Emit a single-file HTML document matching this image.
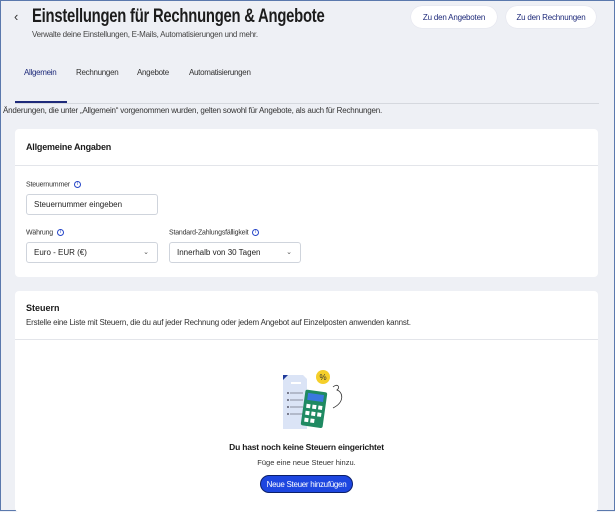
<!DOCTYPE html>
<html><head><meta charset="utf-8"><style>
*{box-sizing:border-box;margin:0;padding:0}
body{width:615px;height:511px;background:#eef0f5;font-family:"Liberation Sans",sans-serif;color:#1c1c1c;position:relative;overflow:hidden;border:1px solid #5b79ad}
.a{position:absolute;white-space:nowrap}
.btn{position:absolute;top:5px;height:22px;background:#fff;border-radius:11px;font-size:8px;letter-spacing:-0.2px;color:#1e2a7a;display:flex;align-items:center;justify-content:center;box-shadow:0 0 1px #ccd}
.card{position:absolute;left:14px;width:583px;background:#fff;border-radius:4px}
.inp{position:absolute;height:21px;border:1px solid #cfd4dc;border-radius:3px;background:#fff;font-size:8px;padding-left:7px;display:flex;align-items:center;color:#222}
.lbl{font-size:7px;color:#333;letter-spacing:-0.2px}
.i{display:inline-block;width:7px;height:7px;border:1px solid #2747c8;border-radius:50%;font-size:5px;line-height:5px;text-align:center;color:#2747c8;vertical-align:middle;margin-left:2px}
.chev{position:absolute;right:8px;top:5px;font-size:7px;color:#555}
.tab{font-size:8px;letter-spacing:-0.3px;top:67px}
</style></head><body>
<div class="a" style="left:13px;top:8px;font-size:13px;color:#333">‹</div>
<div class="a" style="left:31px;top:5px;font-size:19px;font-weight:bold;letter-spacing:-0.3px;transform:scaleX(0.78);transform-origin:left">Einstellungen für Rechnungen &amp; Angebote</div>
<div class="a" style="left:31px;top:29px;font-size:8px;color:#444;letter-spacing:-0.25px">Verwalte deine Einstellungen, E-Mails, Automatisierungen und mehr.</div>
<div class="btn" style="left:410px;width:86px">Zu den Angeboten</div>
<div class="btn" style="left:505px;width:90px">Zu den Rechnungen</div>
<div class="a tab" style="left:23px;color:#1e2a7a">Allgemein</div>
<div class="a tab" style="left:75px;color:#333">Rechnungen</div>
<div class="a tab" style="left:136px;color:#333">Angebote</div>
<div class="a tab" style="left:188px;color:#333">Automatisierungen</div>
<div class="a" style="left:14px;top:102px;width:584px;height:1px;background:#d5d8de"></div>
<div class="a" style="left:14px;top:100px;width:52px;height:2px;background:#1e2a7a"></div>
<div class="a" style="left:2px;top:105px;font-size:8px;color:#333;letter-spacing:-0.2px">Änderungen, die unter „Allgemein“ vorgenommen wurden, gelten sowohl für Angebote, als auch für Rechnungen.</div>
<div class="card" style="top:128px;height:148px">
<div class="a" style="left:11px;top:13px;font-size:9px;font-weight:bold;letter-spacing:-0.2px">Allgemeine Angaben</div>
<div class="a" style="left:0;top:36px;width:583px;height:1px;background:#e3e5ea"></div>
<div class="a lbl" style="left:11px;top:52px">Steuernummer <span class="i">i</span></div>
<div class="inp" style="left:11px;top:65px;width:132px">Steuernummer eingeben</div>
<div class="a lbl" style="left:11px;top:100px">Währung <span class="i">i</span></div>
<div class="a lbl" style="left:154px;top:100px">Standard-Zahlungsfälligkeit <span class="i">i</span></div>
<div class="inp" style="left:11px;top:113px;width:132px">Euro - EUR (€)<span class="chev">⌄</span></div>
<div class="inp" style="left:154px;top:113px;width:132px">Innerhalb von 30 Tagen<span class="chev">⌄</span></div>
</div>
<div class="card" style="top:290px;height:221px">
<div class="a" style="left:11px;top:12px;font-size:9px;font-weight:bold">Steuern</div>
<div class="a" style="left:11px;top:27px;font-size:8px;color:#333;letter-spacing:-0.2px">Erstelle eine Liste mit Steuern, die du auf jeder Rechnung oder jedem Angebot auf Einzelposten anwenden kannst.</div>
<div class="a" style="left:0;top:48px;width:583px;height:1px;background:#e3e5ea"></div>
<svg class="a" style="left:262px;top:78px" width="70" height="64" viewBox="0 0 70 64">
<path d="M6 6 L26 6 L30 10 L30 60 L6 60 Z" fill="#dbe4f6"/>
<path d="M6 6 L11 6 L6 11Z" fill="#1f3a9a"/>
<rect x="14" y="13" width="10" height="2" fill="#fff"/>
<g fill="#334"><circle cx="11" cy="24" r=".9"/><circle cx="11" cy="31" r=".9"/><circle cx="11" cy="38" r=".9"/><circle cx="11" cy="45" r=".9"/></g>
<g stroke="#556" stroke-width=".6"><line x1="13" y1="24" x2="26" y2="24"/><line x1="13" y1="31" x2="26" y2="31"/><line x1="13" y1="38" x2="26" y2="38"/><line x1="13" y1="45" x2="26" y2="45"/></g>
<g transform="rotate(8 38 40)"><rect x="26" y="22" width="22" height="36" rx="2" fill="#1f8a62"/>
<rect x="29" y="25" width="16" height="7" fill="#3a78e0"/>
<g fill="#fff"><rect x="29" y="36" width="4" height="4"/><rect x="35" y="36" width="4" height="4"/><rect x="41" y="36" width="4" height="4"/><rect x="29" y="43" width="4" height="4"/><rect x="35" y="43" width="4" height="4"/><rect x="41" y="43" width="4" height="4"/><rect x="29" y="50" width="4" height="4"/><rect x="35" y="50" width="4" height="4"/></g></g>
<circle cx="46" cy="8" r="7" fill="#f5cf2a"/><text x="46" y="11" font-size="8" text-anchor="middle" fill="#333" font-family="Liberation Sans">%</text>
<path d="M56 18 c4 -4 8 0 4 3 c6 2 8 12 -4 18" fill="none" stroke="#333" stroke-width=".8"/>
</svg>
<div class="a" style="left:0;width:583px;text-align:center;top:151px;font-size:8.5px;font-weight:bold;letter-spacing:-0.2px">Du hast noch keine Steuern eingerichtet</div>
<div class="a" style="left:0;width:583px;text-align:center;top:167px;font-size:7.5px;color:#333">Füge eine neue Steuer hinzu.</div>
<div class="a" style="left:245px;top:184px;width:93px;height:18px;border-radius:9px;background:#1d46e0;border:1.5px solid #0b1f6a;color:#fff;font-size:8px;letter-spacing:-0.3px;display:flex;align-items:center;justify-content:center">Neue Steuer hinzufügen</div>
</div>
</body></html>
